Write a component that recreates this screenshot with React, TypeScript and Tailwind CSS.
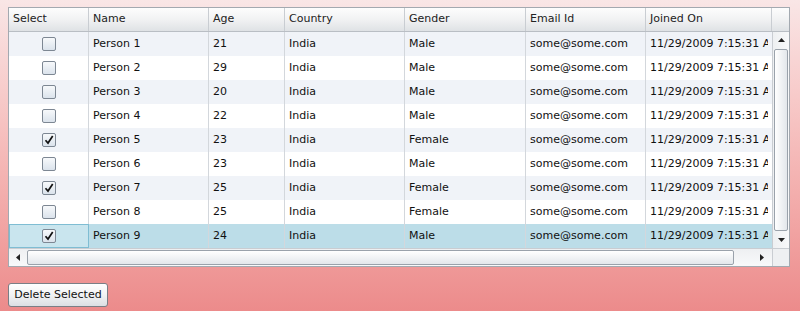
import React from "react";

type Person = { name: string; age: number; gender: string; checked: boolean };

const people: Person[] = [
  { name: "Person 1", age: 21, gender: "Male", checked: false },
  { name: "Person 2", age: 29, gender: "Male", checked: false },
  { name: "Person 3", age: 20, gender: "Male", checked: false },
  { name: "Person 4", age: 22, gender: "Male", checked: false },
  { name: "Person 5", age: 23, gender: "Female", checked: true },
  { name: "Person 6", age: 23, gender: "Male", checked: false },
  { name: "Person 7", age: 25, gender: "Female", checked: true },
  { name: "Person 8", age: 25, gender: "Female", checked: false },
  { name: "Person 9", age: 24, gender: "Male", checked: true },
];

const Checkbox: React.FC<{ checked: boolean }> = ({ checked }) => (
  <div className="w-[14px] h-[14px] rounded-[2px] border border-[#7d8793] bg-gradient-to-b from-[#f7f9fb] to-[#dbe3ec] flex items-center justify-center">
    {checked && (
      <svg width="10" height="10" viewBox="0 0 10 10">
        <path d="M1.5 5.2 L4 8 L8.7 1" fill="none" stroke="#111" strokeWidth="1.7" />
      </svg>
    )}
  </div>
);

const HeaderCell: React.FC<{ w: string; label?: string }> = ({ w, label }) => (
  <div className={`${w} h-full shrink-0 border-r border-[#c9cdd2] px-[4px] flex items-center`}>
    {label}
  </div>
);

const App: React.FC = () => {
  return (
    <div
      className="w-full h-[311px] bg-gradient-to-b from-[#f9e6e6] to-[#ec8b8b] pt-[7px] pl-[8px] text-[11px] text-[#111]"
      style={{ fontFamily: '"DejaVu Sans", Verdana, sans-serif' }}
    >
      {/* grid */}
      <div className="w-[782px] border border-[#a3a9b0] bg-white flex flex-col">
        {/* header */}
        <div className="h-[24px] flex bg-gradient-to-b from-[#fdfdfd] via-[#f1f2f3] to-[#dfe2e5] border-b border-[#b9bec4] text-[#222]">
          <HeaderCell w="w-[80px]" label="Select" />
          <HeaderCell w="w-[120px]" label="Name" />
          <HeaderCell w="w-[76px]" label="Age" />
          <HeaderCell w="w-[120px]" label="Country" />
          <HeaderCell w="w-[121px]" label="Gender" />
          <HeaderCell w="w-[120px]" label="Email Id" />
          <HeaderCell w="w-[126px]" label="Joined On" />
          <div className="flex-1" />
        </div>

        {/* body */}
        <div className="flex">
          <div className="w-[763px] overflow-hidden">
            {people.map((p, i) => {
              const selected = i === people.length - 1;
              const bg = selected ? "bg-[#bcdde8]" : i % 2 === 0 ? "bg-[#f0f3f8]" : "bg-white";
              return (
                <div key={p.name} className={`h-[24px] flex ${bg}`}>
                  <div
                    className={`w-[80px] shrink-0 flex items-center justify-center ${
                      selected ? "border border-[#7fbdd3] bg-[#c9e5ee]" : "border-r border-[#d3d7dc]"
                    }`}
                  >
                    <Checkbox checked={p.checked} />
                  </div>
                  <div className="w-[120px] shrink-0 border-r border-[#d3d7dc] px-[4px] flex items-center">{p.name}</div>
                  <div className="w-[76px] shrink-0 border-r border-[#d3d7dc] px-[4px] flex items-center">{p.age}</div>
                  <div className="w-[120px] shrink-0 border-r border-[#d3d7dc] px-[4px] flex items-center">India</div>
                  <div className="w-[121px] shrink-0 border-r border-[#d3d7dc] px-[4px] flex items-center">{p.gender}</div>
                  <div className="w-[120px] shrink-0 border-r border-[#d3d7dc] px-[4px] flex items-center">some@some.com</div>
                  <div className="w-[122px] shrink-0 pl-[4px] flex items-center overflow-hidden whitespace-nowrap">
                    11/29/2009 7:15:31 AM
                  </div>
                </div>
              );
            })}
          </div>

          {/* vertical scrollbar */}
          <div className="w-[17px] border-l border-[#c9cdd2] bg-gradient-to-r from-[#eef0f2] to-[#f8f9fa] flex flex-col items-center">
            <div className="h-[16px] flex items-center justify-center">
              <svg width="7" height="4" viewBox="0 0 7 4">
                <path d="M0 4 L3.5 0 L7 4 Z" fill="#222" />
              </svg>
            </div>
            <div className="w-[14px] flex-1 my-[1px] rounded-[2px] border border-[#9aa2ab] bg-gradient-to-r from-[#ffffff] to-[#e3e7eb]" />
            <div className="h-[16px] flex items-center justify-center">
              <svg width="7" height="4" viewBox="0 0 7 4">
                <path d="M0 0 L3.5 4 L7 0 Z" fill="#222" />
              </svg>
            </div>
          </div>
        </div>

        {/* horizontal scrollbar */}
        <div className="h-[18px] flex border-t border-[#c9cdd2] bg-gradient-to-b from-[#eef0f2] to-[#f8f9fa]">
          <div className="w-[18px] flex items-center justify-center">
            <svg width="4" height="7" viewBox="0 0 4 7">
              <path d="M4 0 L0 3.5 L4 7 Z" fill="#222" />
            </svg>
          </div>
          <div className="w-[707px] my-[1px] rounded-[2px] border border-[#9aa2ab] bg-gradient-to-b from-[#ffffff] to-[#e3e7eb]" />
          <div className="flex-1 flex items-center justify-end pr-[8px]">
            <svg width="4" height="7" viewBox="0 0 4 7">
              <path d="M0 0 L4 3.5 L0 7 Z" fill="#222" />
            </svg>
          </div>
          <div className="w-[17px] border-l border-[#c9cdd2] bg-[#eef0f2]" />
        </div>
      </div>

      <button className="mt-[16px] w-[100px] h-[24px] flex items-center justify-center rounded-[3px] border border-[#7a7f86] bg-gradient-to-b from-[#ffffff] via-[#f1f2f3] to-[#dcdfe3] text-[11px] text-[#111] whitespace-nowrap">
        Delete Selected
      </button>
    </div>
  );
};

export default App;
